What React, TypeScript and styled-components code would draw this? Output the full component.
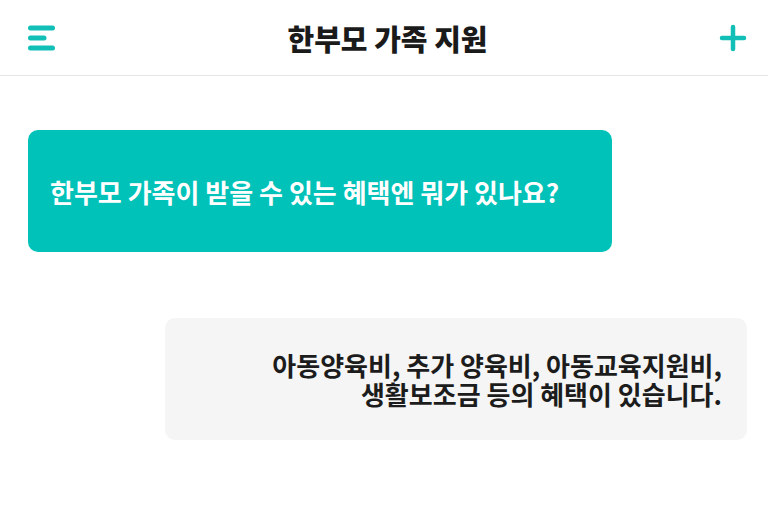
import styled, { createGlobalStyle } from "styled-components"

const GlobalStyle = createGlobalStyle`
    html, body {
        margin: 0;
        padding: 0;
        background: #ffffff;
    }

    body {
        font-family: "Noto Sans CJK KR", "Noto Sans", sans-serif;
    }
`

const Page = styled.div`
    width: 768px;
    height: 507px;
    background: #ffffff;
    display: flex;
    flex-direction: column;
`

const Header = styled.header`
    height: 75px;
    border-bottom: 1px solid #e6e6e6;
    display: grid;
    grid-template-columns: 60px 1fr 60px;
    align-items: center;
    padding: 0 21px 0 28px;
`

const IconButton = styled.button<{ align: "start" | "end" }>`
    border: none;
    background: none;
    padding: 0;
    width: 28px;
    height: 28px;
    justify-self: ${props => props.align};
    cursor: pointer;
    display: flex;
    align-items: center;
    justify-content: center;
`

const Title = styled.h1`
    margin: 0;
    text-align: center;
    font-size: 29px;
    font-weight: 900;
    color: #1a1a1a;
    letter-spacing: 0;
`

const Chat = styled.main`
    display: flex;
    flex-direction: column;
    padding: 54px 21px 0 28px;
    gap: 66px;
`

const Bubble = styled.div<{ mine: boolean }>`
    width: ${props => props.mine ? "584px" : "582px"};
    height: 122px;
    box-sizing: border-box;
    border-radius: 10px;
    align-self: ${props => props.mine ? "flex-start" : "flex-end"};
    background: ${props => props.mine ? "#00c2b9" : "#f5f5f5"};
    color: ${props => props.mine ? "#ffffff" : "#1c1c1c"};
    display: flex;
    flex-direction: column;
    justify-content: center;
    align-items: ${props => props.mine ? "flex-start" : "flex-end"};
    padding: ${props => props.mine ? "0 22px" : "0 25px"};
    text-align: ${props => props.mine ? "left" : "right"};
    font-size: 26px;
    font-weight: 700;
    line-height: 29px;
`

const Line = styled.span`
    display: block;
    white-space: nowrap;
`

const MenuIcon = () => (
    <svg width="28" height="28" viewBox="0 0 28 28" fill="none">
        <line x1="2.5" y1="4" x2="24.5" y2="4" stroke="#12bfb7" strokeWidth="5" strokeLinecap="round" />
        <line x1="2.5" y1="14" x2="16" y2="14" stroke="#12bfb7" strokeWidth="5" strokeLinecap="round" />
        <line x1="2.5" y1="24" x2="24.5" y2="24" stroke="#12bfb7" strokeWidth="5" strokeLinecap="round" />
    </svg>
)

const PlusIcon = () => (
    <svg width="28" height="28" viewBox="0 0 28 28" fill="none">
        <line x1="14" y1="3" x2="14" y2="25" stroke="#12bfb7" strokeWidth="4.5" strokeLinecap="round" />
        <line x1="3" y1="14" x2="25" y2="14" stroke="#12bfb7" strokeWidth="4.5" strokeLinecap="round" />
    </svg>
)

const App = () => {
    return (
        <Page>
            <GlobalStyle />
            <Header>
                <IconButton align="start" aria-label="메뉴">
                    <MenuIcon />
                </IconButton>

                <Title>한부모 가족 지원</Title>

                <IconButton align="end" aria-label="추가">
                    <PlusIcon />
                </IconButton>
            </Header>

            <Chat>
                <Bubble mine={true}>
                    <Line>한부모 가족이 받을 수 있는 혜택엔 뭐가 있나요?</Line>
                </Bubble>

                <Bubble mine={false}>
                    <Line>아동양육비, 추가 양육비, 아동교육지원비,</Line>
                    <Line>생활보조금 등의 혜택이 있습니다.</Line>
                </Bubble>
            </Chat>
        </Page>
    )
}

export default App
